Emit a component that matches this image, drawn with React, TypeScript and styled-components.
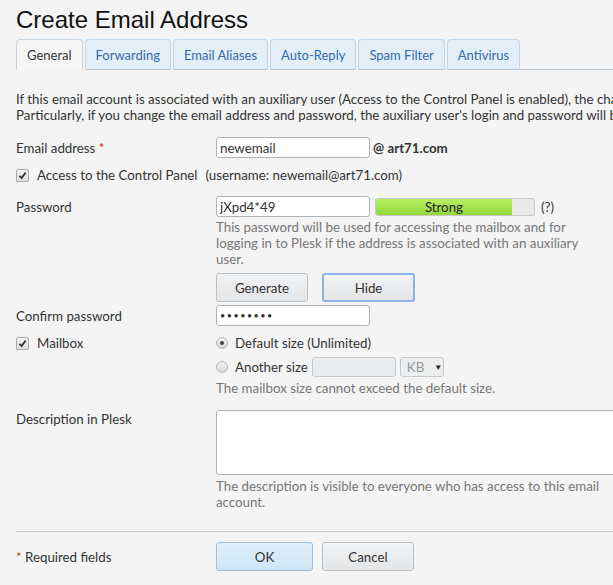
import React from 'react';
import styled, { createGlobalStyle } from 'styled-components';

const GlobalStyle = createGlobalStyle`
  html, body {
    margin: 0;
    padding: 0;
    background: #f4f4f4;
    overflow: hidden;
  }
  body {
    font-family: Lato, 'Open Sans', sans-serif;
    font-size: 13.3px;
    line-height: 16px;
    color: #333;
  }
`;

const tabs = ['General', 'Forwarding', 'Email Aliases', 'Auto-Reply', 'Spam Filter', 'Antivirus'];

function CheckMark() {
  return (
    <svg width='9' height='9' viewBox='0 0 9 9'>
      <path d='M1.5 4.8 L3.6 7 L7.6 1.6' fill='none' stroke='#333' strokeWidth='1.8' />
    </svg>
  );
}

function App() {
  return (
    <Page>
      <GlobalStyle />
      <Title>Create Email Address</Title>
      <TabBar>
        {tabs.map((tab, i) => (
          <Tab key={tab} $active={i === 0}>
            {tab}
          </Tab>
        ))}
        <TabLine />
      </TabBar>
      <Intro>
        <div>
          If this email account is associated with an auxiliary user (Access to the Control Panel is enabled), the changes will also apply to the auxiliary user.
        </div>
        <div>
          Particularly, if you change the email address and password, the auxiliary user's login and password will be changed accordingly.
        </div>
      </Intro>

      <Row $mt={14}>
        <Label>
          Email address <Req>*</Req>
        </Label>
        <Field>
          <TextInput defaultValue='newemail' />
          <Domain>@ art71.com</Domain>
        </Field>
      </Row>

      <Row $mt={9}>
        <CheckLabel>
          <CheckBox>
            <CheckMark />
          </CheckBox>
          Access to the Control Panel
        </CheckLabel>
        <Username>(username: newemail@art71.com)</Username>
      </Row>

      <Row $mt={13}>
        <Label>Password</Label>
        <Field>
          <TextInput defaultValue='jXpd4*49' />
          <Strength>
            <StrengthFill style={{ width: '86%' }}>Strong</StrengthFill>
          </Strength>
          <Help>(?)</Help>
        </Field>
      </Row>
      <Hint $mt={2}>
        This password will be used for accessing the mailbox and for logging in to Plesk if the address is associated with an auxiliary user.
      </Hint>
      <ButtonRow $mt={6}>
        <Button $width={92}>Generate</Button>
        <Button $width={93} $focused>
          Hide
        </Button>
      </ButtonRow>

      <Row $mt={3}>
        <Label>Confirm password</Label>
        <Field>
          <TextInput type='password' defaultValue='jXpd4*49' $dots />
        </Field>
      </Row>

      <Row $mt={9}>
        <CheckLabel $width={200}>
          <CheckBox>
            <CheckMark />
          </CheckBox>
          Mailbox
        </CheckLabel>
        <Field>
          <Radio $checked />
          <span>Default size (Unlimited)</span>
        </Field>
      </Row>
      <Row $mt={6}>
        <Label />
        <Field>
          <Radio />
          <span>Another size</span>
          <SizeInput disabled />
          <UnitSelect>
            KB <Arrow>▼</Arrow>
          </UnitSelect>
        </Field>
      </Row>
      <Hint $mt={3}>The mailbox size cannot exceed the default size.</Hint>

      <Row $mt={14} $top>
        <Label $top>Description in Plesk</Label>
        <Field>
          <TextArea />
        </Field>
      </Row>
      <Hint $mt={3}>The description is visible to everyone who has access to this email account.</Hint>

      <Divider />

      <Footer>
        <Label>
          <Req>*</Req> Required fields
        </Label>
        <ButtonGroup>
          <Button $width={97} $primary>
            OK
          </Button>
          <Button $width={92}>Cancel</Button>
        </ButtonGroup>
      </Footer>
    </Page>
  );
}

export default App;

const Page = styled.div`
  width: 613px;
  height: 585px;
  padding: 0 0 0 16px;
  box-sizing: border-box;
  overflow: hidden;
`;

const Title = styled.h1`
  margin: 0;
  padding-top: 6px;
  font-family: 'Liberation Sans', Arial, sans-serif;
  font-weight: normal;
  font-size: 24px;
  line-height: 27px;
  color: #111;
`;

const TabBar = styled.div`
  display: flex;
  margin-top: 6px;
  height: 31px;
  gap: 2px;
  align-items: flex-end;
`;

const Tab = styled.div<{ $active?: boolean }>`
  height: 31px;
  box-sizing: border-box;
  padding: 0 10px;
  display: flex;
  align-items: center;
  font-size: 13px;
  border: 1px solid ${props => (props.$active ? '#c6d4df' : '#bcd6ec')};
  border-bottom: ${props => (props.$active ? '1px solid #f4f4f4' : '1px solid #b3c4d2')};
  border-radius: 4px 4px 0 0;
  background: ${props => (props.$active ? '#f6f6f6' : '#e3eef7')};
  color: ${props => (props.$active ? '#333' : '#2f6dab')};
  white-space: nowrap;
`;

const TabLine = styled.div`
  flex: 1;
  border-bottom: 1px solid #b3c4d2;
  margin-left: -2px;
`;

const Intro = styled.div`
  margin-top: 21px;
  white-space: nowrap;
`;

const Row = styled.div<{ $mt: number; $top?: boolean }>`
  display: flex;
  align-items: ${props => (props.$top ? 'flex-start' : 'center')};
  margin-top: ${props => props.$mt}px;
  white-space: nowrap;
`;

const Label = styled.div<{ $top?: boolean }>`
  width: 200px;
  flex-shrink: 0;
  padding-top: ${props => (props.$top ? '1px' : '0')};
`;

const Req = styled.span`
  color: #c0392b;
`;

const Field = styled.div`
  display: flex;
  align-items: center;
`;

const TextInput = styled.input<{ $dots?: boolean }>`
  width: 154px;
  height: 21px;
  box-sizing: border-box;
  border: 1px solid #abb4bb;
  border-radius: 3px;
  background: #fff;
  padding: 0 3px;
  font-family: Lato, sans-serif;
  font-size: ${props => (props.$dots ? '9px' : '13.3px')};
  letter-spacing: ${props => (props.$dots ? '1.5px' : '0')};
  color: #333;
  outline: none;
`;

const Domain = styled.span`
  margin-left: 3px;
  font-weight: bold;
`;

const CheckLabel = styled.label<{ $width?: number }>`
  display: flex;
  align-items: center;
  flex-shrink: 0;
  width: ${props => (props.$width ? `${props.$width}px` : 'auto')};
`;

const CheckBox = styled.span`
  width: 11px;
  height: 11px;
  margin-right: 8px;
  border: 1px solid #a9a9a9;
  border-radius: 2px;
  background: linear-gradient(#f5f5f5, #dcdcdc);
  display: flex;
  align-items: center;
  justify-content: center;
`;

const Username = styled.span`
  margin-left: 8px;
`;

const Strength = styled.div`
  width: 160px;
  height: 18px;
  box-sizing: border-box;
  margin-left: 5px;
  border: 1px solid #c8c8c8;
  border-radius: 3px;
  background: #e9e9e9;
  overflow: hidden;
  display: flex;
`;

const StrengthFill = styled.div`
  height: 100%;
  background: linear-gradient(#b8f064, #92d83a);
  color: #222;
  text-align: center;
`;

const Help = styled.span`
  margin-left: 6px;
`;

const Hint = styled.div<{ $mt: number }>`
  margin-top: ${props => props.$mt}px;
  margin-left: 200px;
  width: 385px;
  color: #777;
`;

const ButtonRow = styled.div<{ $mt: number }>`
  display: flex;
  gap: 14px;
  margin-top: ${props => props.$mt}px;
  margin-left: 200px;
`;

const ButtonGroup = styled.div`
  display: flex;
  gap: 9px;
`;

const Button = styled.button<{ $width: number; $focused?: boolean; $primary?: boolean }>`
  width: ${props => props.$width}px;
  height: 29px;
  box-sizing: border-box;
  border: ${props => (props.$focused ? '2px solid #8cb2e8' : props.$primary ? '1px solid #9fbfd9' : '1px solid #b8c0c6')};
  border-radius: 3px;
  background: ${props => (props.$primary ? 'linear-gradient(#dff0fc, #cfe5f6)' : 'linear-gradient(#f2f3f4, #e3e5e7)')};
  font-family: Lato, sans-serif;
  font-size: 13.3px;
  color: #333;
  padding: 0;
`;

const Radio = styled.span<{ $checked?: boolean }>`
  width: 12px;
  height: 12px;
  box-sizing: border-box;
  border-radius: 50%;
  border: 1px solid #b5b5b5;
  background: linear-gradient(#f2f2f2, #d8d8d8);
  margin-right: 7px;
  display: flex;
  align-items: center;
  justify-content: center;
  &::after {
    content: '';
    width: 4px;
    height: 4px;
    border-radius: 50%;
    background: ${props => (props.$checked ? '#444' : 'transparent')};
  }
`;

const SizeInput = styled.input`
  width: 84px;
  height: 20px;
  box-sizing: border-box;
  margin-left: 4px;
  border: 1px solid #c3c9cd;
  border-radius: 3px;
  background: #e9ecee;
`;

const UnitSelect = styled.div`
  width: 44px;
  height: 20px;
  box-sizing: border-box;
  margin-left: 4px;
  border: 1px solid #c3c9cd;
  border-radius: 3px;
  background: #eceeef;
  color: #999;
  display: flex;
  align-items: center;
  padding-left: 6px;
`;

const Arrow = styled.span`
  font-size: 8px;
  color: #222;
  margin-left: 10px;
`;

const TextArea = styled.textarea`
  width: 420px;
  height: 65px;
  box-sizing: border-box;
  border: 1px solid #abb4bb;
  border-radius: 3px;
  background: #fff;
  resize: none;
  outline: none;
`;

const Divider = styled.hr`
  margin: 21px 0 0 0;
  border: none;
  border-top: 1px solid #c8c8c8;
`;

const Footer = styled.div`
  display: flex;
  align-items: center;
  margin-top: 10px;
`;
